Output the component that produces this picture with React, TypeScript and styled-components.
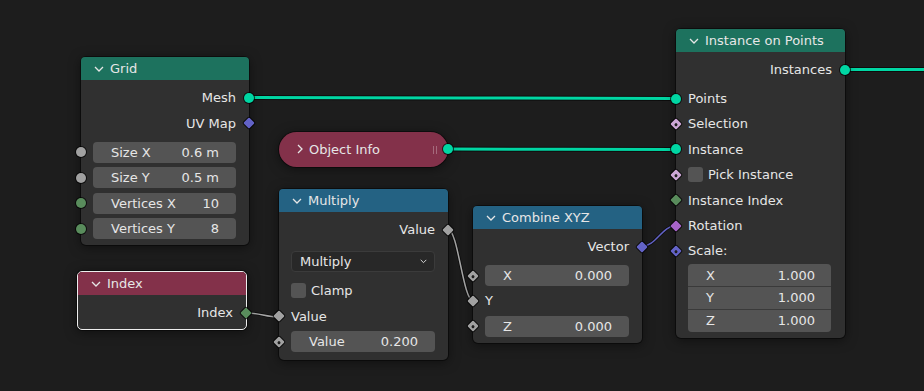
import React from 'react';
import styled, { createGlobalStyle } from 'styled-components';

// socket colours (blender default theme)
const GEO = '#00d6a3';
const FLOAT = '#a1a1a1';
const INT = '#598c5c';
const VEC = '#6363c7';
const BOOL = '#cca6d6';
const ROT = '#a663c7';

const GEO_HEAD = '#1d725e';
const CONV_HEAD = '#246283';
const INPUT_HEAD = '#83314a';

const GlobalStyle = createGlobalStyle`
  html, body {
    margin: 0;
    padding: 0;
    background: #1d1d1d;
  }
  body {
    font-family: 'DejaVu Sans', 'Liberation Sans', sans-serif;
  }
`;

const Canvas = styled.div`
  position: relative;
  width: 924px;
  height: 391px;
  overflow: hidden;
  background: #1d1d1d;
  color: #e6e6e6;
  font-size: 13px;
`;

const LinkLayer = styled.svg`
  position: absolute;
  left: 0;
  top: 0;
  width: 924px;
  height: 391px;
`;

const Node = styled.div<{ $x: number; $y: number; $w?: number; $active?: boolean }>`
  position: absolute;
  left: ${p => p.$x}px;
  top: ${p => p.$y}px;
  width: ${p => p.$w ?? 169}px;
  box-sizing: border-box;
  background: #303030;
  border-radius: 5px;
  border: ${p => (p.$active ? '1px solid #eeeeee' : 'none')};
  box-shadow: 0 0 0 1px rgba(0, 0, 0, 0.45), 0 2px 12px rgba(0, 0, 0, 0.5);
`;

const Header = styled.div<{ $color: string }>`
  height: 23px;
  display: flex;
  align-items: center;
  gap: 6px;
  padding-left: 13px;
  background: ${p => p.$color};
  border-radius: 4px 4px 0 0;
`;

const Collapsed = styled.div<{ $x: number; $y: number; $color: string }>`
  position: absolute;
  left: ${p => p.$x}px;
  top: ${p => p.$y}px;
  width: 169px;
  height: 35px;
  box-sizing: border-box;
  display: flex;
  align-items: center;
  gap: 6px;
  padding-left: 18px;
  background: ${p => p.$color};
  border-radius: 18px;
  box-shadow: 0 0 0 1px rgba(0, 0, 0, 0.45), 0 2px 12px rgba(0, 0, 0, 0.5);
`;

const Grip = styled.span`
  position: absolute;
  right: 11px;
  top: 14px;
  width: 2px;
  height: 8px;
  border-left: 1px solid rgba(255, 255, 255, 0.28);
  border-right: 1px solid rgba(255, 255, 255, 0.28);
`;

const Body = styled.div<{ $bottom?: number }>`
  display: flex;
  flex-direction: column;
  padding: 5px 0 ${p => p.$bottom ?? 4}px;
`;

const Row = styled.div<{ $out?: boolean; $gap?: number }>`
  position: relative;
  height: 25.4px;
  display: flex;
  align-items: center;
  justify-content: ${p => (p.$out ? 'flex-end' : 'flex-start')};
  gap: 5px;
  padding: 0 13px 0 12px;
  margin-top: ${p => p.$gap ?? 0}px;
  white-space: nowrap;
`;

type Kind = 'circle' | 'diamond' | 'dot';

const Socket = styled.span<{ $color: string; $kind: Kind; $right?: boolean }>`
  position: absolute;
  top: 50%;
  ${p => (p.$right ? 'right: 0;' : 'left: 0;')}
  width: ${p => (p.$kind === 'circle' ? 10 : 8)}px;
  height: ${p => (p.$kind === 'circle' ? 10 : 8)}px;
  background: ${p => p.$color};
  border-radius: ${p => (p.$kind === 'circle' ? '50%' : '1px')};
  box-shadow: 0 0 0 1px rgba(0, 0, 0, 0.7);
  transform: translate(${p => (p.$right ? '50%' : '-50%')}, -50%)
    ${p => (p.$kind === 'circle' ? '' : 'rotate(45deg)')};
  z-index: 2;
  &::after {
    content: '';
    display: ${p => (p.$kind === 'dot' ? 'block' : 'none')};
    position: absolute;
    left: 2.5px;
    top: 2.5px;
    width: 3px;
    height: 3px;
    border-radius: 50%;
    background: #1d1d1d;
  }
`;

const Field = styled.div`
  flex: 1;
  height: 21px;
  box-sizing: border-box;
  display: flex;
  align-items: center;
  justify-content: space-between;
  padding: 0 17px 0 18px;
  background: #545454;
  border-radius: 4px;
`;

const VectorField = styled.div`
  display: flex;
  flex-direction: column;
  margin: 0.5px 14px 0 12px;
  border-radius: 4px;
  overflow: hidden;
  background: #3a3a3a;
  gap: 1px;
`;

const VectorRow = styled.div`
  height: 21.9px;
  display: flex;
  align-items: center;
  justify-content: space-between;
  padding: 0 16px 0 18px;
  background: #545454;
`;

const Dropdown = styled.div`
  flex: 1;
  height: 21px;
  box-sizing: border-box;
  display: flex;
  align-items: center;
  justify-content: space-between;
  padding: 0 7px 0 8px;
  background: #282828;
  border: 1px solid #3b3b3b;
  border-radius: 4px;
`;

const Check = styled.span`
  width: 15px;
  height: 15px;
  background: #545454;
  border-radius: 3px;
  flex: none;
`;

const Chevron: React.FC<{ open?: boolean; size?: number }> = ({ open = true, size = 10 }) =>
  open ? (
    <svg width={size} height={size / 2 + 1} viewBox="0 0 10 6">
      <polyline points="1,1 5,5 9,1" fill="none" stroke="#e6e6e6" strokeWidth="1.3" />
    </svg>
  ) : (
    <svg width="6" height="10" viewBox="0 0 6 10">
      <polyline points="1,1 5,5 1,9" fill="none" stroke="#e6e6e6" strokeWidth="1.3" />
    </svg>
  );

const curve = (x1: number, y1: number, x2: number, y2: number) => {
  const d = Math.abs(x2 - x1) * 0.4;
  return `M${x1} ${y1} C${x1 + d} ${y1} ${x2 - d} ${y2} ${x2} ${y2}`;
};

const Link: React.FC<{ from: [number, number]; to: [number, number]; color: string; thick?: boolean }> = ({
  from,
  to,
  color,
  thick,
}) => {
  const d = curve(from[0], from[1], to[0], to[1]);
  return (
    <g fill="none">
      <path d={d} stroke="rgba(0,0,0,0.55)" strokeWidth={thick ? 5 : 3.2} />
      <path d={d} stroke={color} strokeWidth={thick ? 3 : 1.5} />
    </g>
  );
};

export default function App() {
  return (
    <Canvas>
      <GlobalStyle />
      <LinkLayer>
        <Link from={[249, 97.5]} to={[676, 98.5]} color={GEO} thick />
        <Link from={[448, 149]} to={[676, 149.5]} color={GEO} thick />
        <Link from={[845, 69.5]} to={[930, 69.5]} color={GEO} thick />
        <Link from={[448, 229.5]} to={[473, 300.5]} color="#a8a8a8" />
        <Link from={[247, 313]} to={[279, 317]} color="#a8a8a8" />
        <Link from={[642, 246.5]} to={[676, 225.5]} color={VEC} />
      </LinkLayer>

      <Node $x={81} $y={57} $w={168}>
        <Header $color={GEO_HEAD}>
          <Chevron />
          Grid
        </Header>
        <Body>
          <Row $out>
            Mesh
            <Socket $right $kind="circle" $color={GEO} />
          </Row>
          <Row $out>
            UV Map
            <Socket $right $kind="diamond" $color={VEC} />
          </Row>
          <Row $gap={4}>
            <Socket $kind="circle" $color={FLOAT} />
            <Field>
              <span>Size X</span>
              <span>0.6 m</span>
            </Field>
          </Row>
          <Row>
            <Socket $kind="circle" $color={FLOAT} />
            <Field>
              <span>Size Y</span>
              <span>0.5 m</span>
            </Field>
          </Row>
          <Row>
            <Socket $kind="circle" $color={INT} />
            <Field>
              <span>Vertices X</span>
              <span>10</span>
            </Field>
          </Row>
          <Row>
            <Socket $kind="circle" $color={INT} />
            <Field>
              <span>Vertices Y</span>
              <span>8</span>
            </Field>
          </Row>
        </Body>
      </Node>

      <Collapsed $x={279} $y={131.5} $color={INPUT_HEAD}>
        <Chevron open={false} />
        Object Info
        <Grip />
        <Socket $right $kind="circle" $color={GEO} />
      </Collapsed>

      <Node $x={279} $y={189}>
        <Header $color={CONV_HEAD}>
          <Chevron />
          Multiply
        </Header>
        <Body $bottom={6}>
          <Row $out>
            Value
            <Socket $right $kind="diamond" $color={FLOAT} />
          </Row>
          <Row $gap={6.5}>
            <Dropdown>
              <span>Multiply</span>
              <Chevron size={7} />
            </Dropdown>
          </Row>
          <Row $gap={4}>
            <Check />
            Clamp
          </Row>
          <Row>
            <Socket $kind="diamond" $color={FLOAT} />
            Value
          </Row>
          <Row>
            <Socket $kind="dot" $color={FLOAT} />
            <Field>
              <span>Value</span>
              <span>0.200</span>
            </Field>
          </Row>
        </Body>
      </Node>

      <Node $x={473} $y={206}>
        <Header $color={CONV_HEAD}>
          <Chevron />
          Combine XYZ
        </Header>
        <Body>
          <Row $out>
            Vector
            <Socket $right $kind="diamond" $color={VEC} />
          </Row>
          <Row $gap={3.5}>
            <Socket $kind="dot" $color={FLOAT} />
            <Field>
              <span>X</span>
              <span>0.000</span>
            </Field>
          </Row>
          <Row>
            <Socket $kind="diamond" $color={FLOAT} />
            Y
          </Row>
          <Row>
            <Socket $kind="dot" $color={FLOAT} />
            <Field>
              <span>Z</span>
              <span>0.000</span>
            </Field>
          </Row>
        </Body>
      </Node>

      <Node $x={676} $y={29}>
        <Header $color={GEO_HEAD}>
          <Chevron />
          Instance on Points
        </Header>
        <Body $bottom={6.6}>
          <Row $out>
            Instances
            <Socket $right $kind="circle" $color={GEO} />
          </Row>
          <Row $gap={3.5}>
            <Socket $kind="circle" $color={GEO} />
            Points
          </Row>
          <Row>
            <Socket $kind="dot" $color={BOOL} />
            Selection
          </Row>
          <Row>
            <Socket $kind="circle" $color={GEO} />
            Instance
          </Row>
          <Row>
            <Socket $kind="dot" $color={BOOL} />
            <Check />
            Pick Instance
          </Row>
          <Row>
            <Socket $kind="diamond" $color={INT} />
            Instance Index
          </Row>
          <Row>
            <Socket $kind="diamond" $color={ROT} />
            Rotation
          </Row>
          <Row>
            <Socket $kind="dot" $color={VEC} />
            Scale:
          </Row>
          <VectorField>
            {['X', 'Y', 'Z'].map(axis => (
              <VectorRow key={axis}>
                <span>{axis}</span>
                <span>1.000</span>
              </VectorRow>
            ))}
          </VectorField>
        </Body>
      </Node>

      <Node $x={77} $y={271} $w={170} $active>
        <Header $color={INPUT_HEAD}>
          <Chevron />
          Index
        </Header>
        <Body>
          <Row $out>
            Index
            <Socket $right $kind="diamond" $color={INT} />
          </Row>
        </Body>
      </Node>
    </Canvas>
  );
}
